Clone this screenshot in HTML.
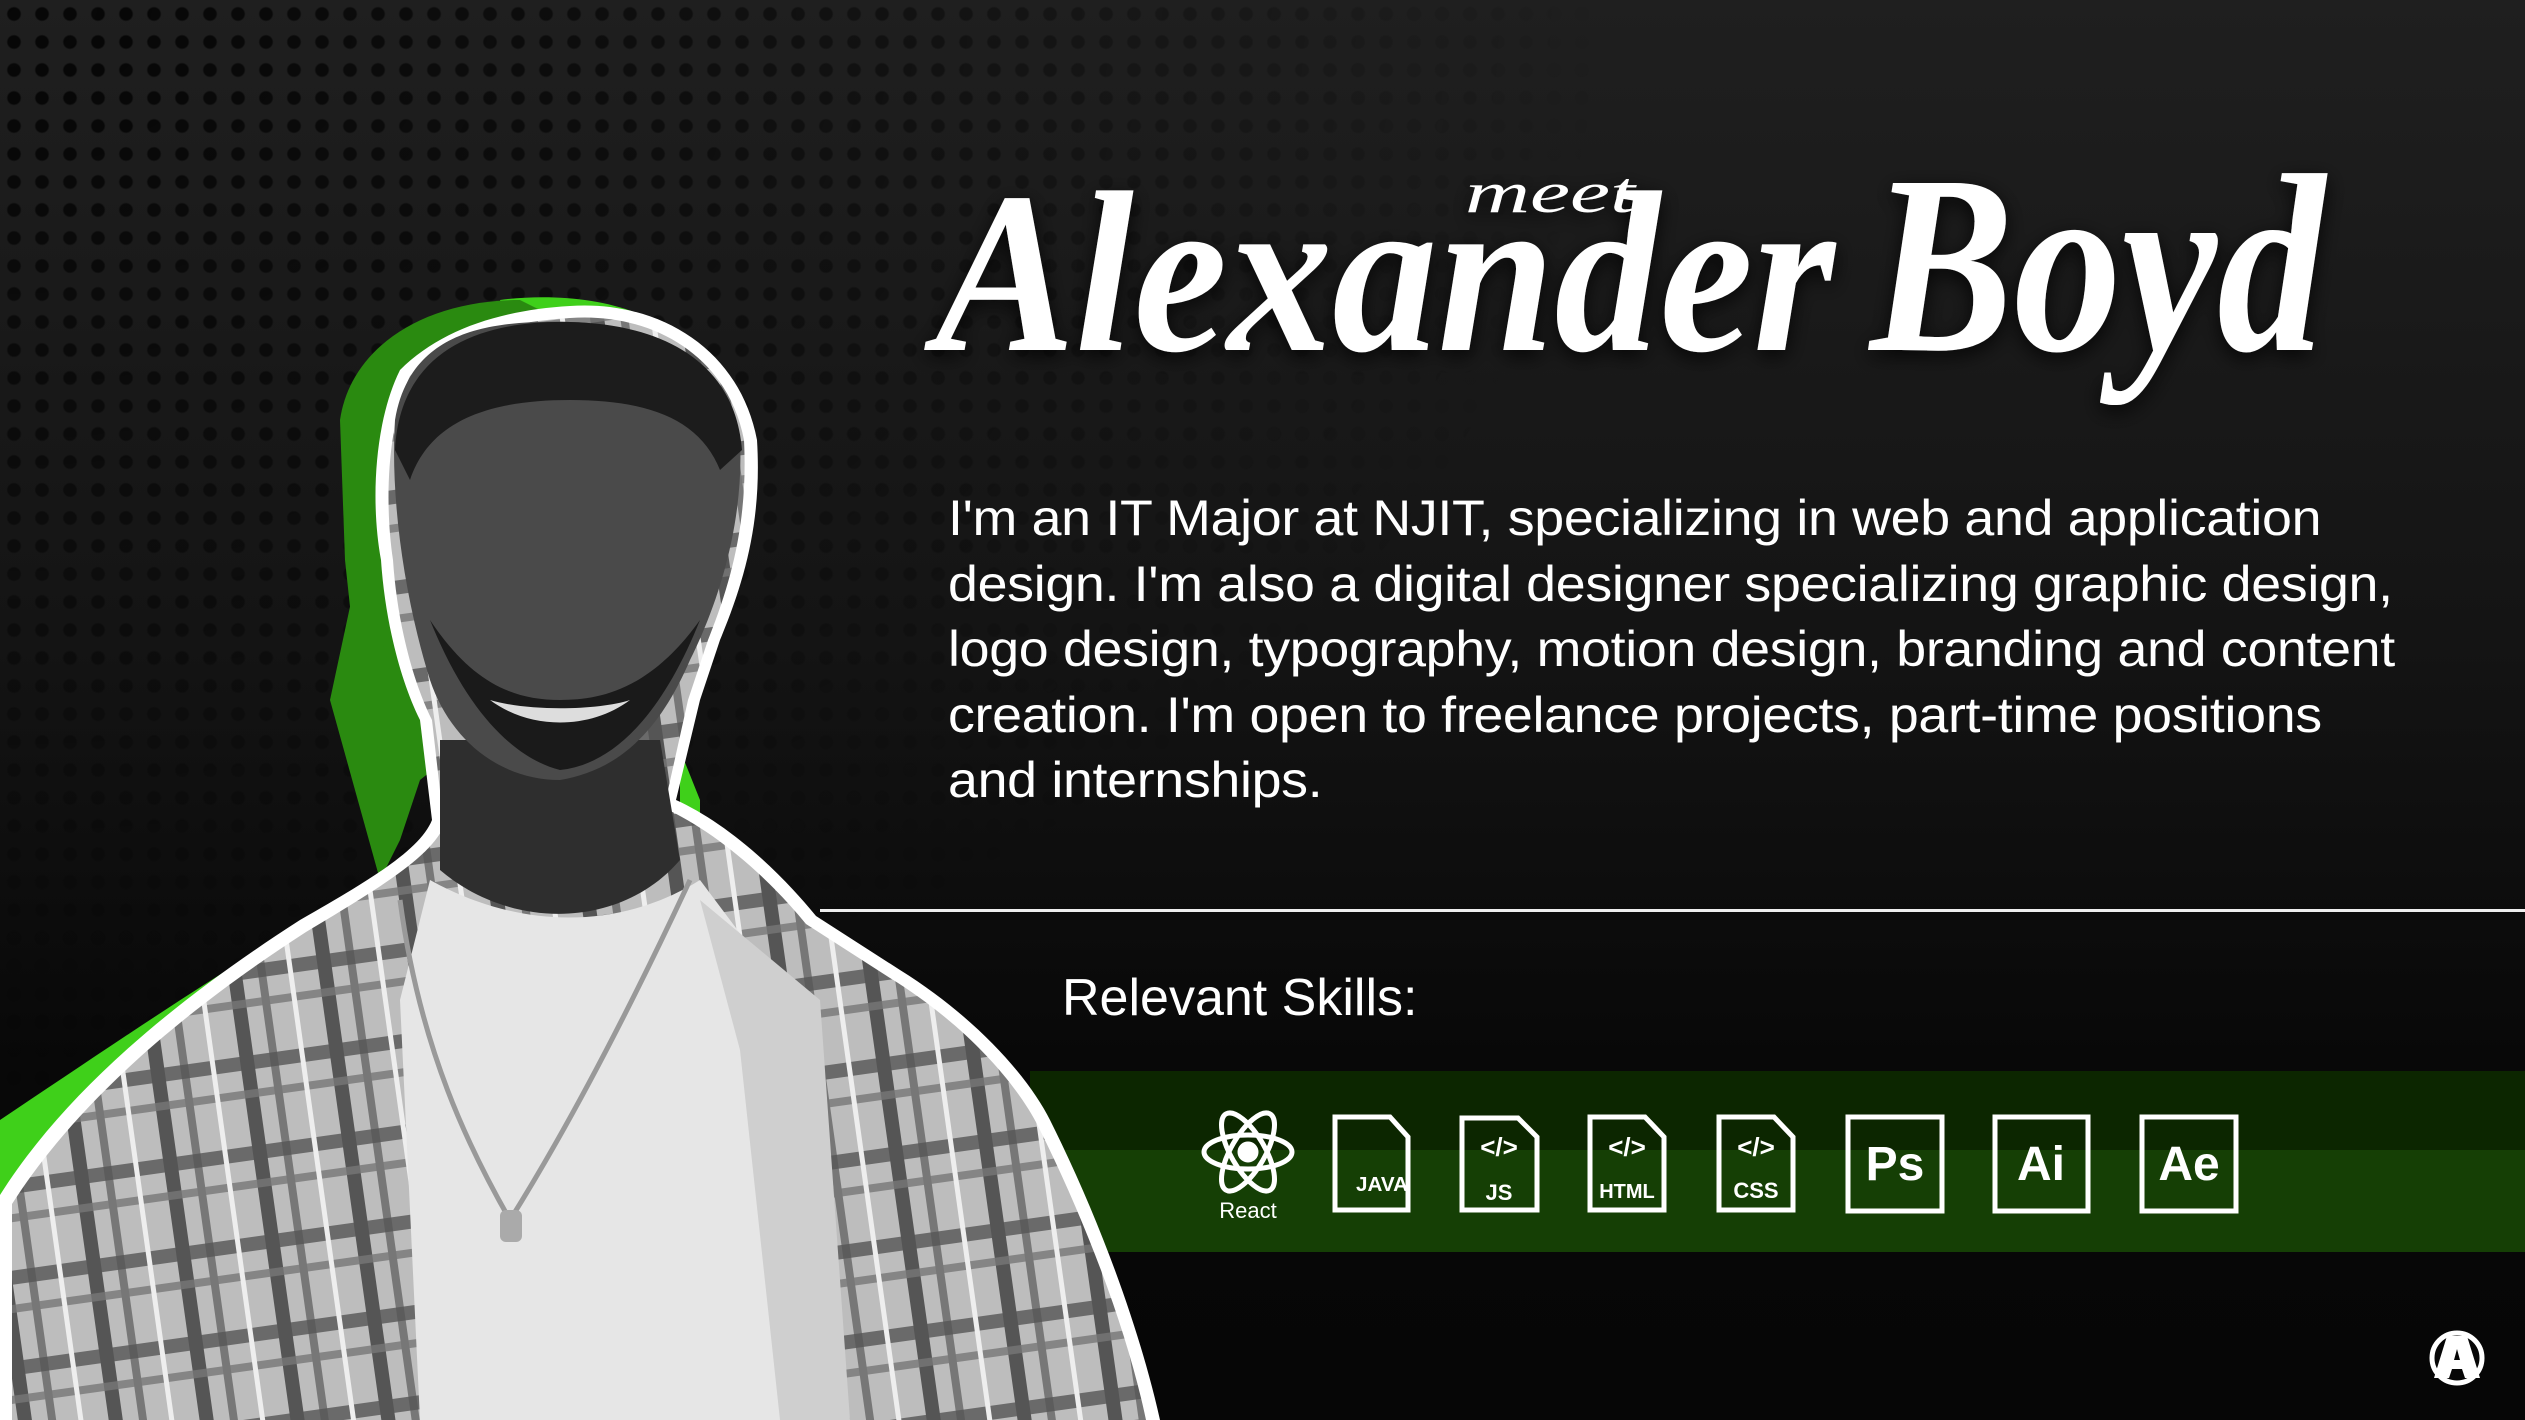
<!DOCTYPE html>
<html><head><meta charset="utf-8"><style>
html,body{margin:0;padding:0;}
body{width:2525px;height:1420px;overflow:hidden;position:relative;background:#0b0b0b;font-family:"Liberation Sans",sans-serif;}
#bg{position:absolute;left:0;top:0;width:2525px;height:1420px;background:linear-gradient(180deg,#1f1f1f 0%,#141414 45%,#080808 75%,#060606 100%);}
#dots{position:absolute;left:0;top:0;width:2525px;height:1420px;
background-image:radial-gradient(circle,#050505 6px,transparent 7.5px);background-size:28px 28px;
-webkit-mask-image:radial-gradient(ellipse 1600px 1100px at 0 0,rgba(0,0,0,.95) 0%,rgba(0,0,0,.55) 50%,transparent 100%);
mask-image:radial-gradient(ellipse 1600px 1100px at 0 0,rgba(0,0,0,.95) 0%,rgba(0,0,0,.55) 50%,transparent 100%);}
#para{position:absolute;left:948px;top:486px;color:#fff;font-size:50px;line-height:65.5px;white-space:nowrap;letter-spacing:-0.3px;transform:scaleX(1.075);transform-origin:0 0;}
#line{position:absolute;left:820px;top:909px;width:1705px;height:3px;background:#eee;}
#skills{position:absolute;left:1062px;top:968px;color:#fff;font-size:52px;}
#band1{position:absolute;left:1030px;top:1071px;width:1495px;height:79px;background:#0c2600;}
#band2{position:absolute;left:1030px;top:1150px;width:1495px;height:102px;background:#153f05;}
svg{position:absolute;left:0;top:0;}
</style></head><body>
<div id="bg"></div>
<div id="dots"></div>
<div id="band1"></div><div id="band2"></div>
<div id="line"></div>
<div id="para">I'm an IT Major at NJIT, specializing in web and application<br>design. I'm also a digital designer specializing graphic design,<br>logo design, typography, motion design, branding and content<br>creation. I'm open to freelance projects, part-time positions<br>and internships.</div>
<div id="skills">Relevant Skills:</div>

<svg width="2525" height="1420" viewBox="0 0 2525 1420">
<defs>
<pattern id="plaid" width="90" height="90" patternUnits="userSpaceOnUse" patternTransform="rotate(-8)">
<rect width="90" height="90" fill="#bdbdbd"/>
<rect x="0" y="0" width="14" height="90" fill="#555"/>
<rect x="30" y="0" width="8" height="90" fill="#777"/>
<rect x="0" y="0" width="90" height="14" fill="#555" opacity=".8"/>
<rect x="0" y="34" width="90" height="8" fill="#777" opacity=".8"/>
<rect x="60" y="0" width="5" height="90" fill="#eee"/>
</pattern>
<filter id="sh" x="-10%" y="-10%" width="120%" height="130%"><feDropShadow dx="0" dy="6" stdDeviation="10" flood-color="#000" flood-opacity=".8"/></filter>
</defs>
<!-- green shadow silhouette -->
<path d="M500 300 C560 292 640 300 680 340 L680 820 C560 840 470 860 380 880 C250 950 120 1040 0 1120 L0 1420 L700 1420 L700 800 Z" fill="#3fd01a"/>
<path d="M340 420 C350 350 420 300 520 300 L560 320 L520 700 L420 780 L360 700 L345 560 Z" fill="#2a8a10"/>
<path d="M360 560 L420 780 L400 840 L380 880 L330 700 Z" fill="#2a8a10"/>
<!-- person outline -->
<path d="M570 306 C660 300 740 350 757 440 C762 520 745 580 720 640 L700 700 L676 800 C720 820 770 860 816 916 L900 970 C980 1020 1030 1080 1050 1120 C1100 1220 1140 1330 1160 1420 L0 1420 L0 1195 C60 1100 160 1010 300 920 C370 880 420 850 432 820 L420 720 C400 680 385 620 381 560 C370 500 375 420 400 370 C440 330 500 310 570 306 Z" fill="#fff"/>
<path d="M570 318 C652 312 728 356 744 440 C748 520 732 580 708 640 L688 700 L664 808 C708 828 760 868 806 924 L890 978 C968 1026 1018 1086 1038 1126 C1088 1226 1128 1334 1146 1420 L12 1420 L12 1204 C72 1110 170 1020 306 932 C376 890 430 858 444 826 L432 720 C412 680 397 620 393 560 C384 500 388 424 410 376 C448 338 504 322 570 318 Z" fill="url(#plaid)"/>
<!-- tshirt -->
<path d="M430 880 C520 930 620 930 700 880 L790 1000 L820 1420 L420 1420 L400 1000 Z" fill="#e6e6e6"/>
<path d="M700 900 L820 1000 L850 1420 L780 1420 L740 1050 Z" fill="#cfcfcf"/>
<!-- neck/face -->
<path d="M440 740 L660 740 L680 860 C620 930 510 930 440 870 Z" fill="#2e2e2e"/>
<path d="M395 420 C410 330 490 320 570 322 C650 324 730 360 740 440 C744 520 720 600 690 660 C660 730 620 770 560 780 C500 780 450 740 430 680 C405 600 390 500 395 420 Z" fill="#4a4a4a"/>
<path d="M395 450 C400 350 480 320 570 322 C660 324 735 360 742 450 L720 470 C700 420 650 400 570 400 C490 400 430 420 410 480 Z" fill="#1c1c1c"/>
<path d="M430 620 C470 720 520 760 560 770 C610 765 660 720 700 620 C650 690 600 700 560 700 C510 700 470 680 430 620 Z" fill="#1a1a1a"/>
<path d="M490 700 C530 730 590 730 630 700 C600 710 530 712 490 700 Z" fill="#ddd"/>
<!-- chain -->
<path d="M400 900 C420 1050 470 1150 510 1220 C560 1140 620 1030 690 880" fill="none" stroke="#999" stroke-width="5"/>
<rect x="500" y="1210" width="22" height="32" rx="6" fill="#aaa"/>

<!-- title -->
<g filter="url(#sh)" fill="#fff">
<text x="1465" y="212" font-family="Liberation Serif,serif" font-style="italic" font-size="58" textLength="170" lengthAdjust="spacingAndGlyphs">meet</text>
<text x="935" y="350" font-family="Liberation Serif,serif" font-style="italic" font-weight="bold" font-size="230" textLength="900" lengthAdjust="spacingAndGlyphs">Alexander</text>
<text x="1870" y="350" font-family="Liberation Serif,serif" font-style="italic" font-weight="bold" font-size="255" textLength="455" lengthAdjust="spacingAndGlyphs">Boyd</text>
</g>

<!-- icons -->
<g fill="none" stroke="#fff" stroke-width="5">
<g transform="translate(1248,1152)">
<ellipse rx="44" ry="17"/><ellipse rx="44" ry="17" transform="rotate(60)"/><ellipse rx="44" ry="17" transform="rotate(-60)"/>
<circle r="8" fill="#fff"/>
</g>
<path d="M1335 1117 H1390 L1408 1137 V1210 H1335 Z"/>
<path d="M1462 1118 H1518 L1537 1137 V1210 H1462 Z"/>
<path d="M1590 1117 H1645 L1664 1137 V1210 H1590 Z"/>
<path d="M1719 1117 H1774 L1793 1137 V1210 H1719 Z"/>
<rect x="1848" y="1117" width="94" height="94"/>
<rect x="1995" y="1117" width="93" height="94"/>
<rect x="2142" y="1117" width="94" height="94"/>
</g>
<g fill="#fff" stroke="none" font-family="Liberation Sans,sans-serif" font-weight="bold" text-anchor="middle">
<text x="1248" y="1218" font-size="22" font-weight="normal">React</text>
<text x="1382" y="1191" font-size="20" textLength="52" lengthAdjust="spacingAndGlyphs">JAVA</text>
<text x="1499" y="1156" font-size="26">&lt;/&gt;</text><text x="1499" y="1200" font-size="22">JS</text>
<text x="1627" y="1156" font-size="26">&lt;/&gt;</text><text x="1627" y="1198" font-size="20">HTML</text>
<text x="1756" y="1156" font-size="26">&lt;/&gt;</text><text x="1756" y="1198" font-size="22">CSS</text>
<text x="1895" y="1180" font-size="48">Ps</text>
<text x="2041" y="1180" font-size="48">Ai</text>
<text x="2189" y="1180" font-size="48">Ae</text>
</g>

<!-- logo -->
<circle cx="2457" cy="1358" r="25" fill="none" stroke="#fff" stroke-width="5"/>
<path d="M2447 1336 H2467 L2480 1378 H2465 L2462 1369 H2452 L2449 1378 H2434 Z M2454 1360 H2460 L2457 1349 Z" fill="#fff" fill-rule="evenodd"/>
</svg>
</body></html>
